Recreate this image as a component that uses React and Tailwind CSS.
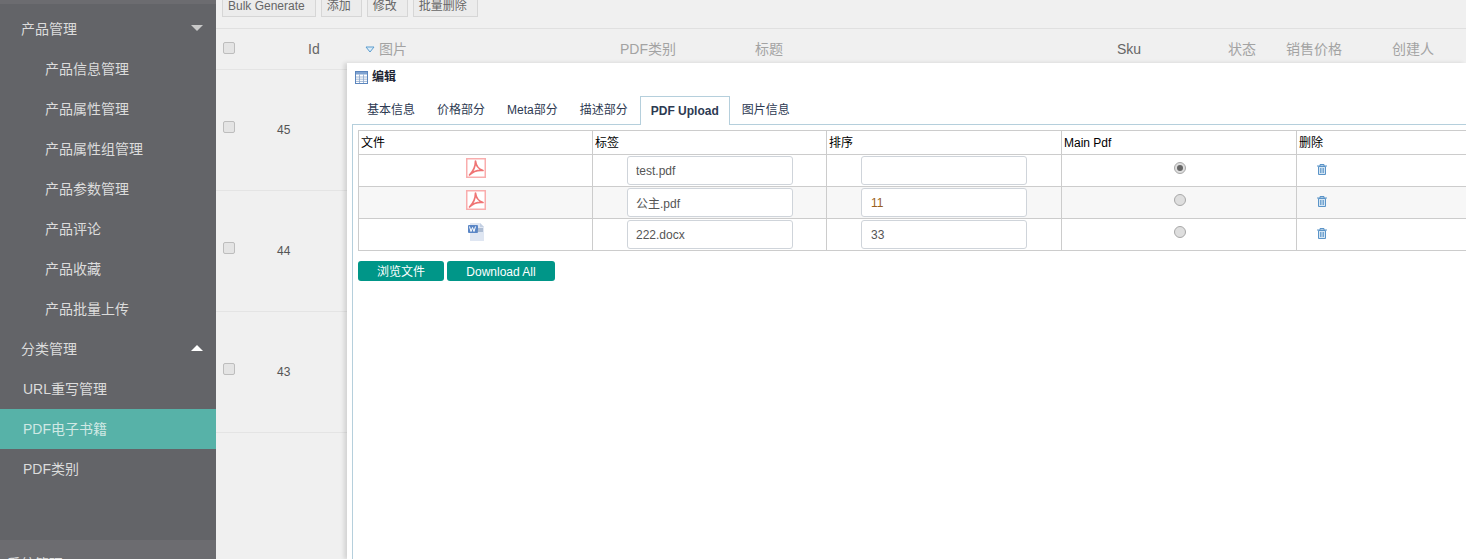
const font = { fontFamily: '"Liberation Sans", "Noto Sans CJK SC", sans-serif' };

const subItems = ["产品信息管理", "产品属性管理", "产品属性组管理", "产品参数管理", "产品评论", "产品收藏", "产品批量上传"];
const rows = [45, 44, 43];
const tabs = ["基本信息", "价格部分", "Meta部分", "描述部分", "PDF Upload", "图片信息"];
const toolbar = ["Bulk Generate", "添加", "修改", "批量删除"];
const files = [
  { name: "test.pdf", sort: "", type: "pdf", main: true },
  { name: "公主.pdf", sort: "11", type: "pdf", stripe: true, sortClass: "text-[#9a5f20]" },
  { name: "222.docx", sort: "33", type: "doc", sortClass: "text-[#555]" },
];
const columns = [
  { title: "文件", width: "w-[234px]" },
  { title: "标签", width: "w-[234px]" },
  { title: "排序", width: "w-[235px]" },
  { title: "Main Pdf", width: "w-[235px]" },
  { title: "删除", width: "w-[235px]" },
];

function PdfIcon() {
  return (
    <svg width="20" height="20" viewBox="0 0 20 20" className="block">
      <rect x="0.75" y="0.75" width="18.5" height="18.5" fill="#fff" stroke="#f9adad" strokeWidth="1.5" />
      <path
        d="M9.500 3C10 8 12.500 11 17 12.500C12.500 12 7 13.500 3.500 17C7 13.500 9.500 8.500 9.500 3z"
        fill="none"
        stroke="#ef7474"
        strokeWidth="1.700"
        strokeLinejoin="round"
      />
    </svg>
  );
}

function DocIcon() {
  return (
    <svg width="18" height="19" viewBox="0 0 18 19" className="block">
      <path d="M3 1h10l4 4v14H3z" fill="#dfe6f2" />
      <path d="M13 1l4 4h-4z" fill="#c3cfe2" />
      <rect x="1" y="3" width="10" height="8" rx="1" fill="#5a86c6" />
      <path d="M2.500 4.500l1.500 5 1.500-4 1.500 4 1.500-5" fill="none" stroke="#fff" strokeWidth="1" />
      <path d="M11 7h5M10 9h6" stroke="#7d93b3" strokeWidth="1" />
    </svg>
  );
}

function TrashIcon() {
  return (
    <svg width="10" height="11" viewBox="0 0 10 11" className="block">
      <path d="M0 2h10M3 2V.5h4V2" fill="none" stroke="#5b94c8" />
      <path d="M1.500 2.500h7v8h-7z" fill="#d6e6f3" stroke="#5b94c8" />
      <path d="M3.500 4v5M5 4v5M6.500 4v5" stroke="#5b94c8" strokeWidth="0.800" />
    </svg>
  );
}

function TableIcon() {
  return (
    <svg width="13" height="13" viewBox="0 0 13 13" className="block">
      <rect x="0.500" y="0.500" width="12" height="12" fill="#fff" stroke="#5b85bd" />
      <rect x="1" y="1" width="11" height="2.500" fill="#7fa2d0" />
      <path d="M1 6h11M1 8.200h11M1 10.400h11M4.500 3.500V12M8.500 3.500V12" stroke="#8aa6cc" strokeWidth="0.800" />
    </svg>
  );
}

function Checkbox() {
  return <span className="block h-3 w-3 rounded-[2px] border border-[#bdbdbd] bg-[#e4e4e4]" />;
}

function Radio({ checked }) {
  return (
    <span className="flex h-3 w-3 items-center justify-center rounded-full border border-[#a8a8a8] bg-[#dedede]">
      {checked && <span className="h-[6px] w-[6px] rounded-full bg-[#666]" />}
    </span>
  );
}

function Sidebar() {
  return (
    <aside className="flex h-full w-[216px] shrink-0 flex-col bg-[#636468] text-sm text-[#dcdcdc]">
      <div className="h-1 shrink-0 bg-[#6c6c70]" />
      <div className="mt-[5px] flex h-10 shrink-0 items-center justify-between pl-[21px] pr-[13px]">
        <span>产品管理</span>
        <span className="-mt-[3px] h-0 w-0 border-x-[6px] border-t-[6px] border-x-transparent border-t-[#c9c9c9]" />
      </div>
      {subItems.map((item) => (
        <div key={item} className="flex h-10 shrink-0 items-center pl-[45px]">
          {item}
        </div>
      ))}
      <div className="flex h-10 shrink-0 items-center justify-between pl-[21px] pr-[13px]">
        <span>分类管理</span>
        <span className="-mt-[3px] h-0 w-0 border-x-[6px] border-b-[6px] border-x-transparent border-b-white" />
      </div>
      <div className="flex h-10 shrink-0 items-center pl-[23px]">URL重写管理</div>
      <div className="flex h-10 shrink-0 items-center bg-[#57b2a8] pl-[23px] text-[#cfe8e4]">PDF电子书籍</div>
      <div className="flex h-10 shrink-0 items-center pl-[23px]">PDF类别</div>
      <div className="mt-[51px] flex-1 bg-[#6c6c70] pl-[7px] pt-[14px] leading-5">系统管理</div>
    </aside>
  );
}

function ListHeader() {
  return (
    <div className="grid h-[41px] grid-cols-[85px_57px_255px_135px_362px_112px_57px_106px_1fr] items-center border-b border-[#e4e4e4] pl-[7px] text-sm text-[#a3a3a3]">
      <span className="-mt-[3px]"><Checkbox /></span>
      <span className="text-[#666]">Id</span>
      <span className="flex items-center gap-1">
        <svg width="10" height="7" viewBox="0 0 10 7" className="block">
          <path d="M1 1h8L5 6z" fill="#dcecf7" stroke="#5b9ccf" />
        </svg>
        图片
      </span>
      <span>PDF类别</span>
      <span>标题</span>
      <span className="text-[#666]">Sku</span>
      <span className="-ml-px">状态</span>
      <span>销售价格</span>
      <span>创建人</span>
    </div>
  );
}

function ListRow({ id }) {
  return (
    <div className="flex h-[121px] items-center border-b border-[#e4e4e4] pl-[7px] text-xs text-[#555]">
      <span className="-mt-[6px] w-[54px]"><Checkbox /></span>
      <span className="-mt-px">{id}</span>
    </div>
  );
}

function FileTable() {
  const cell = "border border-[#cccccc] p-0";
  return (
    <table className="w-[1173px] table-fixed border-collapse text-xs text-black">
      <thead>
        <tr className="h-6">
          {columns.map((col) => (
            <th key={col.title} className={`${cell} ${col.width} pl-[2px] text-left font-normal`}>
              {col.title}
            </th>
          ))}
        </tr>
      </thead>
      <tbody>
        {files.map((file) => (
          <tr key={file.name} className={`h-8 ${file.stripe ? "bg-[#f7f7f7]" : "bg-white"}`}>
            <td className={cell}>
              <div className="-mt-[6px] flex justify-center">
                {file.type === "pdf" ? <PdfIcon /> : <DocIcon />}
              </div>
            </td>
            <td className={cell}>
              <input
                readOnly
                value={file.name}
                className="ml-[34px] block h-[29px] w-[166px] rounded-[3px] border border-[#cfd4da] bg-white px-[8px] text-xs text-[#555] outline-none"
              />
            </td>
            <td className={cell}>
              <input
                readOnly
                value={file.sort}
                className={`ml-[34px] block h-[29px] w-[166px] rounded-[3px] border border-[#cfd4da] bg-white px-[9px] text-xs outline-none ${file.sortClass || ""}`}
              />
            </td>
            <td className={cell}>
              <div className="-mt-[5px] flex justify-center pl-[2px]">
                <Radio checked={file.main} />
              </div>
            </td>
            <td className={cell}>
              <div className="-mt-[3px] pl-5"><TrashIcon /></div>
            </td>
          </tr>
        ))}
      </tbody>
    </table>
  );
}

function EditPanel() {
  return (
    <div className="absolute left-[131px] top-[63px] bottom-0 right-0 overflow-hidden bg-white pl-[5px] shadow-[-3px_0_4px_rgba(0,0,0,0.12)]">
      <div className="flex h-[33px] items-center gap-1 pb-[5px] pl-[3px] text-xs font-bold text-[#1d2433]">
        <TableIcon />
        编辑
      </div>
      <div className="flex h-7 pl-[4px] text-xs text-[#2d3a52]">
        {tabs.map((tab) =>
          tab === "PDF Upload" ? (
            <div key={tab} className="relative z-10 mx-px flex h-[29px] items-center border border-b-0 border-[#b5cfdc] bg-white px-[10px] font-bold">
              {tab}
            </div>
          ) : (
            <div key={tab} className="flex items-center px-[11px]">
              {tab}
            </div>
          )
        )}
      </div>
      <div className="h-[460px] w-[1300px] border border-[#b5cfdc] pl-[5px] pt-[5px]">
        <FileTable />
        <div className="mt-[10px] flex gap-[3px] text-xs text-white">
          <button className="h-5 w-[86px] rounded-[3px] bg-[#009688] pt-px">浏览文件</button>
          <button className="h-5 w-[108px] rounded-[3px] bg-[#009688] pt-px">Download All</button>
        </div>
      </div>
    </div>
  );
}

export default function App() {
  return (
    <div className="flex h-[559px] w-[1466px] overflow-hidden" style={font}>
      <Sidebar />
      <main className="relative flex-1 bg-[#f0f0f0]">
        <div className="flex h-[29px] items-start gap-[5px] border-b border-[#e0e0e0] pl-[6px] text-xs text-[#666]">
          {toolbar.map((label) => (
            <div key={label} className="-mt-[6px] flex h-[23px] items-center border border-[#d6d6d6] bg-[#ececec] pl-[5px] pr-[10px]">
              {label}
            </div>
          ))}
        </div>
        <ListHeader />
        {rows.map((id) => (
          <ListRow key={id} id={id} />
        ))}
        <EditPanel />
      </main>
    </div>
  );
}
